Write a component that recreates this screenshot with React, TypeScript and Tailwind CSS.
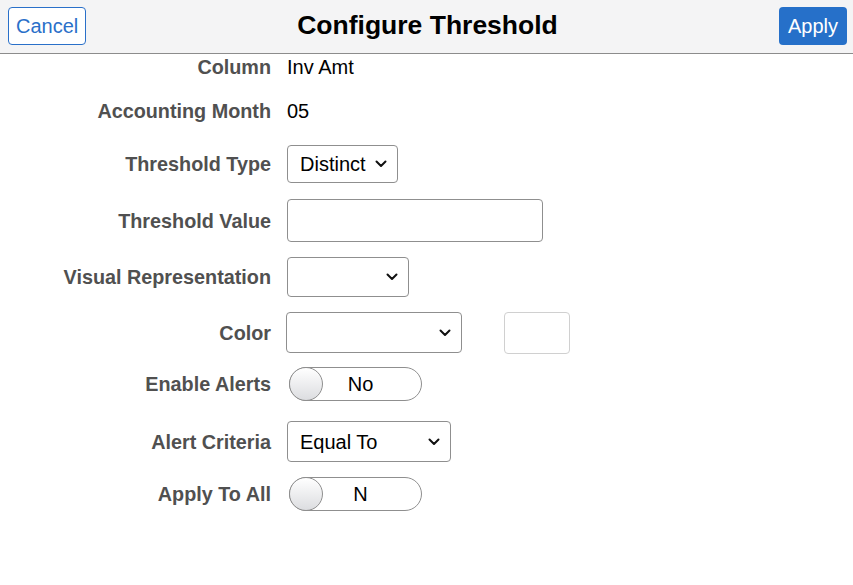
import React from "react";

function Chevron() {
    return <svg width="12" height="8" viewBox="0 0 12 8" className="shrink-0">
        <path d="M1.5 1.5 L6 6 L10.5 1.5" fill="none" stroke="#111" strokeWidth="2" strokeLinecap="round" strokeLinejoin="round"/>
    </svg>
}

function Select({value, w}: {value?: string, w: string}) {
    return <div
        className={`${w} h-full flex items-center justify-between pl-3 pr-2.5 border border-[#8f8f8f] rounded-[4px] bg-white text-[20px] text-black`}>
        <span>{value}</span>
        <Chevron/>
    </div>
}

function Toggle({label}: {label: string}) {
    return <div className="relative w-[133px] h-[34px] rounded-full border border-[#8f8f8f] bg-white flex items-center">
        <div
            className="absolute -left-px -top-px w-[34px] h-[34px] rounded-full border border-[#8f8f8f] bg-gradient-to-b from-white to-[#dcdde0]"/>
        <span className="flex-1 pl-[10px] text-center text-[20px] text-black">{label}</span>
    </div>
}

function Row({label, h, mt, children}: any) {
    return <div className={`flex items-center gap-4 ${h} ${mt}`}>
        <div className="w-[271px] shrink-0 pt-[2px] text-right text-[19.8px] font-bold text-[#505050]">{label}</div>
        <div className="h-full flex items-center gap-[42px]">{children}</div>
    </div>
}

export default function App() {
    return <div className="w-[853px] h-[585px] bg-white overflow-hidden"
                style={{fontFamily: '"Liberation Sans", Arial, sans-serif'}}>
        <div className="h-[54px] bg-[#f4f4f5] border-b border-[#8c8c8c] grid grid-cols-[1fr_auto_1fr] items-center pl-2 pr-[6px] pb-px">
            <div>
                <button
                    className="h-[38px] px-[7px] rounded-[4px] border border-[#2a70c9] bg-white text-[#2a70c9] text-[20px]">Cancel
                </button>
            </div>
            <div className="text-[26.5px] font-bold text-black">Configure Threshold</div>
            <div className="flex justify-end">
                <button className="h-[38px] px-[9px] rounded-[4px] bg-[#2670c9] text-white text-[20px]">Apply</button>
            </div>
        </div>

        <Row label="Column" h="h-[26px]" mt="mt-0">
            <span className="text-[20px] text-black">Inv Amt</span>
        </Row>
        <Row label="Accounting Month" h="h-[26px]" mt="mt-[18px]">
            <span className="text-[20px] text-black">05</span>
        </Row>
        <Row label="Threshold Type" h="h-[38px]" mt="mt-[21px]">
            <Select value="Distinct" w="w-[111px]"/>
        </Row>
        <Row label="Threshold Value" h="h-[43px]" mt="mt-[16px]">
            <div className="w-[256px] h-full border border-[#8f8f8f] rounded-[4px] bg-white"/>
        </Row>
        <Row label="Visual Representation" h="h-[40px]" mt="mt-[15px]">
            <Select w="w-[122px]"/>
        </Row>
        <Row label="Color" h="h-[41px]" mt="mt-[15px]">
            <div className="h-full -ml-px"><Select w="w-[176px]"/></div>
            <div className="w-[66px] h-[42px] border border-[#d0d0d0] rounded-[4px] bg-white"/>
        </Row>
        <Row label="Enable Alerts" h="h-[34px]" mt="mt-[14px]">
            <div className="pl-[2px]"><Toggle label="No"/></div>
        </Row>
        <Row label="Alert Criteria" h="h-[41px]" mt="mt-[20px]">
            <Select value="Equal To" w="w-[164px]"/>
        </Row>
        <Row label="Apply To All" h="h-[34px]" mt="mt-[15px]">
            <div className="pl-[2px]"><Toggle label="N"/></div>
        </Row>
    </div>
}
